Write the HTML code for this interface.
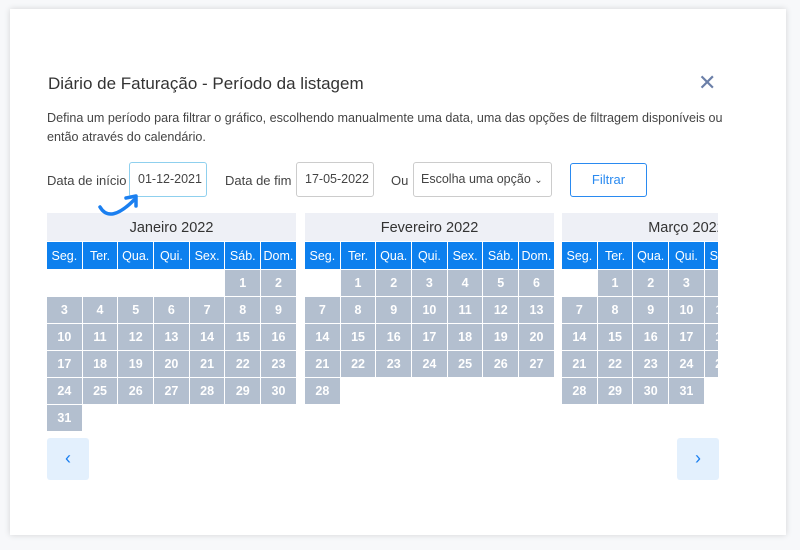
<!DOCTYPE html>
<html><head><meta charset="utf-8"><style>
*{box-sizing:border-box;margin:0;padding:0}
body{width:800px;height:550px;background:#f7f8fa;font-family:"Liberation Sans",sans-serif;position:relative;overflow:hidden}
.modal{position:absolute;left:10px;top:9px;width:776px;height:526px;background:#fff;box-shadow:0 0 6px rgba(0,0,0,.15)}
.t{position:absolute;left:48px;top:74px;font-size:17px;color:#333}
.x{position:absolute;left:698px;top:70px;font-size:22px;color:#6b7fa8}
.d{position:absolute;left:47px;top:109px;font-size:12.6px;line-height:19px;color:#444;width:676px}
.lbl{position:absolute;font-size:13px;color:#444;top:173px}
.in{position:absolute;top:162px;height:35px;border:1px solid #ccc;border-radius:3px;font-size:12.5px;color:#444;line-height:33px;padding-left:8px}
.btn{position:absolute;left:570px;top:163px;width:77px;height:34px;border:1px solid #2a8af0;border-radius:3px;color:#2a8af0;font-size:13px;text-align:center;line-height:32px}
.clip{position:absolute;left:47px;top:213px;width:671px;height:220px;overflow:hidden}
.cal{position:absolute;top:0;width:249px}
.mt{height:28px;background:#eef0f6;text-align:center;font-size:14.5px;line-height:31px;color:#333}
.g{display:grid;grid-template-columns:repeat(7,34.7px);grid-template-rows:27px;grid-auto-rows:26px;gap:1px;margin-top:1px}
.g span{background:#b3bfcf;color:#fff;font-weight:bold;font-size:12.5px;text-align:center;line-height:27px}
.g span.h{background:#0d80ee;font-weight:normal;font-size:12.5px;line-height:28px}
.g span.e{background:transparent}
.nav{position:absolute;top:438px;width:42px;height:42px;background:#e3f0fd;border-radius:3px;color:#1a7ff0;font-size:18px;text-align:center;line-height:40px}
</style></head><body>
<div class="modal"></div>
<div class="t">Diário de Faturação - Período da listagem</div>
<div class="x">✕</div>
<div class="d">Defina um período para filtrar o gráfico, escolhendo manualmente uma data, uma das opções de filtragem disponíveis ou então através do calendário.</div>
<div class="lbl" style="left:47px">Data de início</div>
<div class="in" style="left:129px;width:78px;border-color:#8fd0ee">01-12-2021</div>
<div class="lbl" style="left:225px">Data de fim</div>
<div class="in" style="left:296px;width:78px">17-05-2022</div>
<div class="lbl" style="left:391px">Ou</div>
<div class="in" style="left:413px;width:139px;padding-left:7px">Escolha uma opção <span style="font-size:10px">⌄</span></div>
<div class="btn">Filtrar</div>
<div class="clip">
<div class="cal" style="left:0"><div class="mt">Janeiro 2022</div><div class="g">
<span class="h">Seg.</span><span class="h">Ter.</span><span class="h">Qua.</span><span class="h">Qui.</span><span class="h">Sex.</span><span class="h">Sáb.</span><span class="h">Dom.</span>
<span class="e"></span><span class="e"></span><span class="e"></span><span class="e"></span><span class="e"></span><span>1</span><span>2</span>
<span>3</span><span>4</span><span>5</span><span>6</span><span>7</span><span>8</span><span>9</span>
<span>10</span><span>11</span><span>12</span><span>13</span><span>14</span><span>15</span><span>16</span>
<span>17</span><span>18</span><span>19</span><span>20</span><span>21</span><span>22</span><span>23</span>
<span>24</span><span>25</span><span>26</span><span>27</span><span>28</span><span>29</span><span>30</span>
<span>31</span></div></div>
<div class="cal" style="left:258px"><div class="mt">Fevereiro 2022</div><div class="g">
<span class="h">Seg.</span><span class="h">Ter.</span><span class="h">Qua.</span><span class="h">Qui.</span><span class="h">Sex.</span><span class="h">Sáb.</span><span class="h">Dom.</span>
<span class="e"></span><span>1</span><span>2</span><span>3</span><span>4</span><span>5</span><span>6</span>
<span>7</span><span>8</span><span>9</span><span>10</span><span>11</span><span>12</span><span>13</span>
<span>14</span><span>15</span><span>16</span><span>17</span><span>18</span><span>19</span><span>20</span>
<span>21</span><span>22</span><span>23</span><span>24</span><span>25</span><span>26</span><span>27</span>
<span>28</span></div></div>
<div class="cal" style="left:515px"><div class="mt">Março 2022</div><div class="g">
<span class="h">Seg.</span><span class="h">Ter.</span><span class="h">Qua.</span><span class="h">Qui.</span><span class="h">Sex.</span><span class="h">Sáb.</span><span class="h">Dom.</span>
<span class="e"></span><span>1</span><span>2</span><span>3</span><span>4</span><span>5</span><span>6</span>
<span>7</span><span>8</span><span>9</span><span>10</span><span>11</span><span>12</span><span>13</span>
<span>14</span><span>15</span><span>16</span><span>17</span><span>18</span><span>19</span><span>20</span>
<span>21</span><span>22</span><span>23</span><span>24</span><span>25</span><span>26</span><span>27</span>
<span>28</span><span>29</span><span>30</span><span>31</span></div></div>
</div>
<svg style="position:absolute;left:96px;top:190px;z-index:2" width="50" height="34"><path d="M4 17 Q14 34 38 10" fill="none" stroke="#1a7ff0" stroke-width="3.5" stroke-linecap="round"/><path d="M30 8 L40 6 L40 16" fill="none" stroke="#1a7ff0" stroke-width="3.5" stroke-linecap="round" stroke-linejoin="round"/></svg>
<div class="nav" style="left:47px">‹</div>
<div class="nav" style="left:677px">›</div>
</body></html>
